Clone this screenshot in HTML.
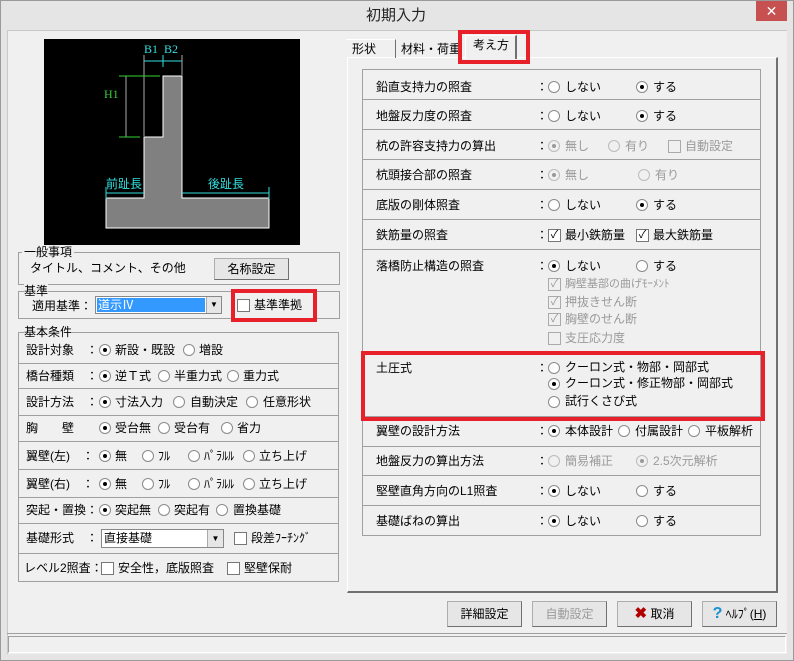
<!DOCTYPE html>
<html><head><meta charset="utf-8">
<style>
*{box-sizing:border-box;margin:0;padding:0}
body{width:794px;height:661px;background:#e5e5e5;font-family:"Liberation Sans","Noto Sans CJK JP",sans-serif;font-size:12px;color:#000;position:relative;overflow:hidden}
.a{position:absolute;white-space:nowrap;line-height:14px}
.bx{position:absolute;border:1px solid #a0a0a0}
.r{position:absolute;width:12px;height:12px;border-radius:50%;border:1px solid #8a8a8a;background:#fff}
.r.on::after{content:"";position:absolute;left:3px;top:3px;width:4px;height:4px;border-radius:50%;background:#000}
.r.dis{background:#f0f0f0;border-color:#bbb}
.r.dis.on::after{background:#999}
.c{position:absolute;width:13px;height:13px;border:1px solid #777;background:#fff;font-size:11px;line-height:11px;text-align:center}
.c.dis{border-color:#aaa;background:#f0f0f0;color:#999}
.g{color:#9a9a9a}
.btn{position:absolute;height:26px;border:1px solid #adadad;border-right-color:#707070;border-bottom-color:#707070;background:#e6e6e6;text-align:center;line-height:24px;font-size:12px}
.red{position:absolute;border:4px solid #e8202a}
.hl{position:absolute;height:1px;background:#a0a0a0}
</style></head><body>
<div style="position:absolute;left:0;top:0;width:794px;height:661px;border:1px solid #9a9a9a"></div>
<div class="a" style="left:366px;top:7px;font-size:15px;line-height:18px;color:#222">初期入力</div>
<div style="position:absolute;left:756px;top:1px;width:31px;height:20px;background:#c75050;color:#fff;text-align:center;font-size:14px;line-height:20px">✕</div>
<div style="position:absolute;left:7px;top:30px;width:780px;height:624px;background:#f0f0f0;border-left:1px solid #c8c8c8;border-top:1px solid #c8c8c8"></div>

<!-- drawing -->
<svg style="position:absolute;left:44px;top:39px" width="256" height="206">
<rect width="256" height="206" fill="#000"/>
<path d="M62 159 H100 V98 H119 V37 H138 V159 H225 V189 H62 Z" fill="#808080" stroke="#fff" stroke-width="1"/>
<g stroke="#33e0e0" stroke-width="1"><line x1="100" y1="22" x2="138" y2="22"/><line x1="119" y1="16" x2="119" y2="28"/><line x1="62" y1="154" x2="100" y2="154"/><line x1="62" y1="148" x2="62" y2="160"/><line x1="138" y1="154" x2="225" y2="154"/><line x1="225" y1="148" x2="225" y2="160"/></g>
<g stroke="#aaa"><line x1="100" y1="16" x2="100" y2="97"/><line x1="138" y1="16" x2="138" y2="36"/><line x1="82" y1="37" x2="82" y2="98"/></g>
<g stroke="#33d033"><line x1="75" y1="37" x2="116" y2="37"/><line x1="75" y1="98" x2="96" y2="98"/></g>
<text x="100" y="14" fill="#33e0e0" font-size="12" font-family="Liberation Serif">B1</text>
<text x="120" y="14" fill="#33e0e0" font-size="12" font-family="Liberation Serif">B2</text>
<text x="60" y="59" fill="#33d033" font-size="12" font-family="Liberation Serif">H1</text>
<text x="62" y="149" fill="#33e0e0" font-size="12" font-family="Noto Sans CJK JP">前趾長</text>
<text x="164" y="149" fill="#33e0e0" font-size="12" font-family="Noto Sans CJK JP">後趾長</text>
</svg>

<!-- 一般事項 -->
<div class="bx" style="left:18px;top:252px;width:322px;height:33px"></div>
<div class="a" style="left:22px;top:245px;background:#f0f0f0;padding:0 2px">一般事項</div>
<div class="a" style="left:30px;top:261px">タイトル、コメント、その他</div>
<div class="btn" style="left:214px;top:258px;width:75px;height:22px;line-height:20px">名称設定</div>
<!-- 基準 -->
<div class="bx" style="left:18px;top:291px;width:322px;height:28px"></div>
<div class="a" style="left:24px;top:284px;background:#f0f0f0">基準</div>
<div class="a" style="left:32px;top:299px">適用基準：</div>
<div style="position:absolute;left:95px;top:296px;width:127px;height:18px;border:1px solid #888;background:#fff"></div>
<div class="a" style="left:97px;top:298px;width:108px;height:14px;background:#3399ff;color:#fff;padding-left:1px;line-height:14px">道示Ⅳ</div>
<div style="position:absolute;left:206px;top:297px;width:15px;height:16px;background:#e6e6e6;border-left:1px solid #aaa;font-size:8px;text-align:center;line-height:16px">▼</div>
<div class="c" style="left:237px;top:299px"></div>
<div class="a" style="left:254px;top:298px">基準準拠</div>
<div class="red" style="left:231px;top:289px;width:86px;height:33px"></div>

<!-- 基本条件 -->
<div class="bx" style="left:18px;top:332px;width:321px;height:250px"></div>
<div class="a" style="left:24px;top:325px;background:#f0f0f0">基本条件</div>
<div class="hl" style="left:18px;top:363px;width:321px"></div>
<div class="hl" style="left:18px;top:388px;width:321px"></div>
<div class="hl" style="left:18px;top:415px;width:321px"></div>
<div class="hl" style="left:18px;top:441px;width:321px"></div>
<div class="hl" style="left:18px;top:469px;width:321px"></div>
<div class="hl" style="left:18px;top:497px;width:321px"></div>
<div class="hl" style="left:18px;top:523px;width:321px"></div>
<div class="hl" style="left:18px;top:553px;width:321px"></div>

<div class="a" style="left:26px;top:343px">設計対象　：</div><div class="r on" style="left:99px;top:344px"></div><div class="a" style="left:115px;top:343px">新設・既設</div><div class="r" style="left:183px;top:344px"></div><div class="a" style="left:199px;top:343px">増設</div>
<div class="a" style="left:26px;top:369px">橋台種類　：</div><div class="r on" style="left:99px;top:370px"></div><div class="a" style="left:115px;top:369px">逆Ｔ式</div><div class="r" style="left:158px;top:370px"></div><div class="a" style="left:174px;top:369px">半重力式</div><div class="r" style="left:227px;top:370px"></div><div class="a" style="left:243px;top:369px">重力式</div>
<div class="a" style="left:26px;top:395px">設計方法　：</div><div class="r on" style="left:99px;top:396px"></div><div class="a" style="left:115px;top:395px">寸法入力</div><div class="r" style="left:173px;top:396px"></div><div class="a" style="left:190px;top:395px">自動決定</div><div class="r" style="left:246px;top:396px"></div><div class="a" style="left:263px;top:395px">任意形状</div>
<div class="a" style="left:26px;top:421px">胸　　壁</div><div class="r on" style="left:99px;top:422px"></div><div class="a" style="left:115px;top:421px">受台無</div><div class="r" style="left:158px;top:422px"></div><div class="a" style="left:174px;top:421px">受台有</div><div class="r" style="left:221px;top:422px"></div><div class="a" style="left:237px;top:421px">省力</div>
<div class="a" style="left:26px;top:449px">翼壁(左)　：</div><div class="r on" style="left:99px;top:450px"></div><div class="a" style="left:115px;top:449px">無</div><div class="r" style="left:142px;top:450px"></div><div class="a" style="left:158px;top:449px">ﾌﾙ</div><div class="r" style="left:188px;top:450px"></div><div class="a" style="left:204px;top:449px">ﾊﾟﾗﾙﾙ</div><div class="r" style="left:243px;top:450px"></div><div class="a" style="left:259px;top:449px">立ち上げ</div>
<div class="a" style="left:26px;top:477px">翼壁(右)　：</div><div class="r on" style="left:99px;top:478px"></div><div class="a" style="left:115px;top:477px">無</div><div class="r" style="left:142px;top:478px"></div><div class="a" style="left:158px;top:477px">ﾌﾙ</div><div class="r" style="left:188px;top:478px"></div><div class="a" style="left:204px;top:477px">ﾊﾟﾗﾙﾙ</div><div class="r" style="left:243px;top:478px"></div><div class="a" style="left:259px;top:477px">立ち上げ</div>
<div class="a" style="left:26px;top:503px">突起・置換：</div><div class="r on" style="left:99px;top:504px"></div><div class="a" style="left:115px;top:503px">突起無</div><div class="r" style="left:158px;top:504px"></div><div class="a" style="left:174px;top:503px">突起有</div><div class="r" style="left:216px;top:504px"></div><div class="a" style="left:233px;top:503px">置換基礎</div>
<div class="a" style="left:26px;top:531px">基礎形式　：</div>
<div style="position:absolute;left:101px;top:529px;width:123px;height:19px;border:1px solid #888;background:#fff"></div>
<div class="a" style="left:104px;top:531px">直接基礎</div>
<div style="position:absolute;left:207px;top:530px;width:16px;height:17px;background:#e6e6e6;border-left:1px solid #aaa;font-size:8px;text-align:center;line-height:17px">▼</div>
<div class="c" style="left:234px;top:532px"></div><div class="a" style="left:251px;top:531px">段差ﾌｰﾁﾝｸﾞ</div>
<div class="a" style="left:24px;top:561px">レベル2照査：</div><div class="c" style="left:101px;top:562px"></div><div class="a" style="left:118px;top:561px">安全性，底版照査</div><div class="c" style="left:227px;top:562px"></div><div class="a" style="left:244px;top:561px">堅壁保耐</div>

<!-- tabs -->
<div style="position:absolute;left:347px;top:57px;width:431px;height:536px;border:1px solid #fff;border-right:2px solid #707070;border-bottom:2px solid #707070;background:#f0f0f0"></div>
<div style="position:absolute;left:346px;top:39px;width:50px;height:19px;border-right:1px solid #707070;border-top:1px solid #fff"></div>
<div class="a" style="left:352px;top:42px">形状</div>
<div style="position:absolute;left:396px;top:39px;width:70px;height:19px;border-right:1px solid #707070"></div>
<div class="a" style="left:401px;top:42px">材料・荷重</div>
<div style="position:absolute;left:465px;top:35px;width:52px;height:24px;background:#f0f0f0;border-left:1px solid #fff;border-right:2px solid #707070;border-top:1px solid #fff"></div>
<div class="a" style="left:473px;top:38px">考え方</div>
<div class="red" style="left:458px;top:30px;width:72px;height:34px"></div>

<!-- right table -->
<div class="bx" style="left:362px;top:69px;width:399px;height:467px;border-color:#a0a0a0"></div>
<div class="hl" style="left:362px;top:99px;width:399px"></div>
<div class="hl" style="left:362px;top:129px;width:399px"></div>
<div class="hl" style="left:362px;top:159px;width:399px"></div>
<div class="hl" style="left:362px;top:189px;width:399px"></div>
<div class="hl" style="left:362px;top:219px;width:399px"></div>
<div class="hl" style="left:362px;top:249px;width:399px"></div>
<div class="hl" style="left:362px;top:416px;width:399px"></div>
<div class="hl" style="left:362px;top:446px;width:399px"></div>
<div class="hl" style="left:362px;top:475px;width:399px"></div>
<div class="hl" style="left:362px;top:505px;width:399px"></div>

<div class="a" style="left:376px;top:80px">鉛直支持力の照査</div><div class="a" style="left:536px;top:80px">：</div><div class="r" style="left:548px;top:81px"></div><div class="a" style="left:565px;top:80px">しない</div><div class="r on" style="left:636px;top:81px"></div><div class="a" style="left:653px;top:80px">する</div>
<div class="a" style="left:376px;top:109px">地盤反力度の照査</div><div class="a" style="left:536px;top:109px">：</div><div class="r" style="left:548px;top:110px"></div><div class="a" style="left:565px;top:109px">しない</div><div class="r on" style="left:636px;top:110px"></div><div class="a" style="left:653px;top:109px">する</div>
<div class="a" style="left:376px;top:139px">杭の許容支持力の算出</div><div class="a" style="left:536px;top:139px">：</div><div class="r dis on" style="left:548px;top:140px"></div><div class="a g" style="left:565px;top:139px">無し</div><div class="r dis" style="left:608px;top:140px"></div><div class="a g" style="left:625px;top:139px">有り</div><div class="c dis" style="left:668px;top:140px"></div><div class="a g" style="left:685px;top:139px">自動設定</div>
<div class="a" style="left:376px;top:168px">杭頭接合部の照査</div><div class="a" style="left:536px;top:168px">：</div><div class="r dis on" style="left:548px;top:169px"></div><div class="a g" style="left:565px;top:168px">無し</div><div class="r dis" style="left:638px;top:169px"></div><div class="a g" style="left:655px;top:168px">有り</div>
<div class="a" style="left:376px;top:198px">底版の剛体照査</div><div class="a" style="left:536px;top:198px">：</div><div class="r" style="left:548px;top:199px"></div><div class="a" style="left:565px;top:198px">しない</div><div class="r on" style="left:636px;top:199px"></div><div class="a" style="left:653px;top:198px">する</div>
<div class="a" style="left:376px;top:228px">鉄筋量の照査</div><div class="a" style="left:536px;top:228px">：</div><div class="c" style="left:548px;top:229px">✓</div><div class="a" style="left:565px;top:228px">最小鉄筋量</div><div class="c" style="left:636px;top:229px">✓</div><div class="a" style="left:653px;top:228px">最大鉄筋量</div>
<div class="a" style="left:376px;top:259px">落橋防止構造の照査</div><div class="a" style="left:536px;top:259px">：</div><div class="r on" style="left:548px;top:260px"></div><div class="a" style="left:565px;top:259px">しない</div><div class="r" style="left:636px;top:260px"></div><div class="a" style="left:653px;top:259px">する</div>
<div class="c dis" style="left:548px;top:278px">✓</div><div class="a g" style="left:565px;top:277px;font-size:11px">胸壁基部の曲げﾓｰﾒﾝﾄ</div>
<div class="c dis" style="left:548px;top:296px">✓</div><div class="a g" style="left:565px;top:295px">押抜きせん断</div>
<div class="c dis" style="left:548px;top:313px">✓</div><div class="a g" style="left:565px;top:312px">胸壁のせん断</div>
<div class="c dis" style="left:548px;top:332px"></div><div class="a g" style="left:565px;top:331px">支圧応力度</div>

<div class="a" style="left:376px;top:361px">土圧式</div><div class="a" style="left:536px;top:361px">：</div><div class="r" style="left:548px;top:362px"></div><div class="a" style="left:565px;top:360px">クーロン式・物部・岡部式</div>
<div class="r on" style="left:548px;top:378px"></div><div class="a" style="left:565px;top:376px">クーロン式・修正物部・岡部式</div>
<div class="r" style="left:548px;top:396px"></div><div class="a" style="left:565px;top:394px">試行くさび式</div>
<div class="red" style="left:361px;top:351px;width:404px;height:70px"></div>

<div class="a" style="left:376px;top:424px">翼壁の設計方法</div><div class="a" style="left:536px;top:424px">：</div><div class="r on" style="left:548px;top:425px"></div><div class="a" style="left:565px;top:424px">本体設計</div><div class="r" style="left:618px;top:425px"></div><div class="a" style="left:635px;top:424px">付属設計</div><div class="r" style="left:688px;top:425px"></div><div class="a" style="left:705px;top:424px">平板解析</div>
<div class="a" style="left:376px;top:454px">地盤反力の算出方法</div><div class="a" style="left:536px;top:454px">：</div><div class="r dis" style="left:548px;top:455px"></div><div class="a g" style="left:565px;top:454px">簡易補正</div><div class="r dis on" style="left:636px;top:455px"></div><div class="a g" style="left:653px;top:454px">2.5次元解析</div>
<div class="a" style="left:376px;top:484px">堅壁直角方向のL1照査</div><div class="a" style="left:536px;top:484px">：</div><div class="r on" style="left:548px;top:485px"></div><div class="a" style="left:565px;top:484px">しない</div><div class="r" style="left:636px;top:485px"></div><div class="a" style="left:653px;top:484px">する</div>
<div class="a" style="left:376px;top:514px">基礎ばねの算出</div><div class="a" style="left:536px;top:514px">：</div><div class="r on" style="left:548px;top:515px"></div><div class="a" style="left:565px;top:514px">しない</div><div class="r" style="left:636px;top:515px"></div><div class="a" style="left:653px;top:514px">する</div>

<!-- buttons -->
<div class="btn" style="left:447px;top:601px;width:75px">詳細設定</div>
<div class="btn g" style="left:532px;top:601px;width:75px">自動設定</div>
<div class="btn" style="left:617px;top:601px;width:75px"><span style="color:#b00000;font-weight:bold;font-size:15px">✖</span> 取消</div>
<div class="btn" style="left:702px;top:601px;width:75px"><span style="color:#1a8fd0;font-weight:bold;font-size:16px">?</span> ﾍﾙﾌﾟ(<u>H</u>)</div>

<!-- status -->
<div style="position:absolute;left:7px;top:633px;width:780px;height:1px;background:#a0a0a0"></div>
<div style="position:absolute;left:8px;top:636px;width:778px;height:17px;border:1px solid #a0a0a0;border-right-color:#fff;border-bottom-color:#fff"></div>
</body></html>
